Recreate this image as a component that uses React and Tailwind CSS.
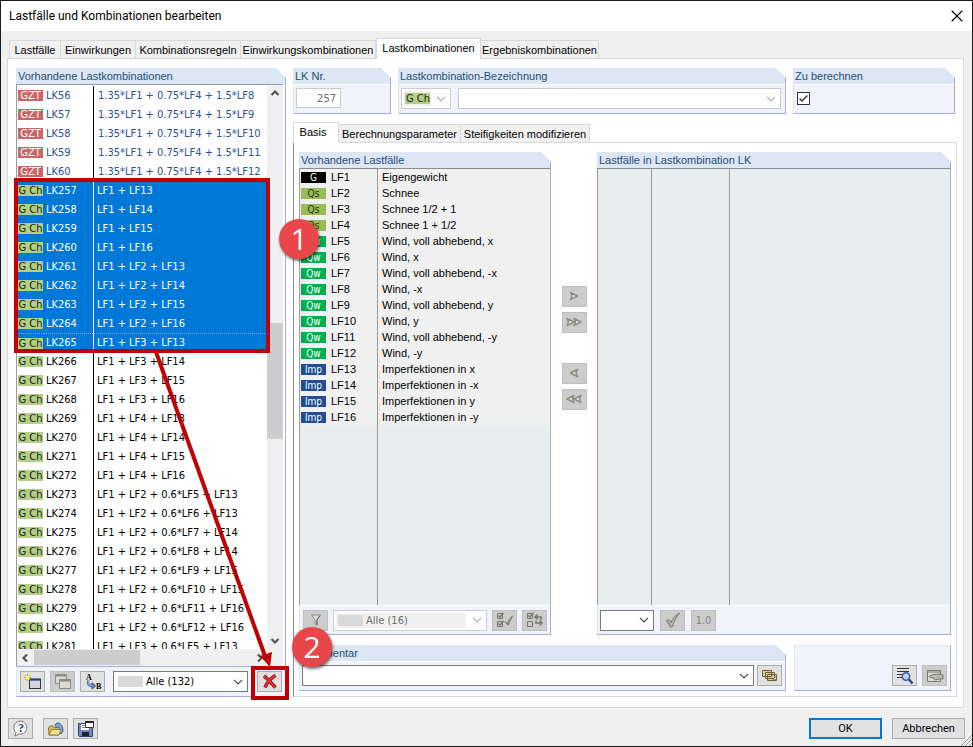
import { X } from "lucide-react";

const ulsCombos = [
  ["LK56", "1.35*LF1 + 0.75*LF4 + 1.5*LF8"],
  ["LK57", "1.35*LF1 + 0.75*LF4 + 1.5*LF9"],
  ["LK58", "1.35*LF1 + 0.75*LF4 + 1.5*LF10"],
  ["LK59", "1.35*LF1 + 0.75*LF4 + 1.5*LF11"],
  ["LK60", "1.35*LF1 + 0.75*LF4 + 1.5*LF12"],
];

const slsCombos = [
  ["LK257", "LF1 + LF13"],
  ["LK258", "LF1 + LF14"],
  ["LK259", "LF1 + LF15"],
  ["LK260", "LF1 + LF16"],
  ["LK261", "LF1 + LF2 + LF13"],
  ["LK262", "LF1 + LF2 + LF14"],
  ["LK263", "LF1 + LF2 + LF15"],
  ["LK264", "LF1 + LF2 + LF16"],
  ["LK265", "LF1 + LF3 + LF13"],
  ["LK266", "LF1 + LF3 + LF14"],
  ["LK267", "LF1 + LF3 + LF15"],
  ["LK268", "LF1 + LF3 + LF16"],
  ["LK269", "LF1 + LF4 + LF13"],
  ["LK270", "LF1 + LF4 + LF14"],
  ["LK271", "LF1 + LF4 + LF15"],
  ["LK272", "LF1 + LF4 + LF16"],
  ["LK273", "LF1 + LF2 + 0.6*LF5 + LF13"],
  ["LK274", "LF1 + LF2 + 0.6*LF6 + LF13"],
  ["LK275", "LF1 + LF2 + 0.6*LF7 + LF14"],
  ["LK276", "LF1 + LF2 + 0.6*LF8 + LF14"],
  ["LK277", "LF1 + LF2 + 0.6*LF9 + LF15"],
  ["LK278", "LF1 + LF2 + 0.6*LF10 + LF15"],
  ["LK279", "LF1 + LF2 + 0.6*LF11 + LF16"],
  ["LK280", "LF1 + LF2 + 0.6*LF12 + LF16"],
  ["LK281", "LF1 + LF3 + 0.6*LF5 + LF13"],
];

const SELECTED = 9;

const loadCases = [
  ["G", "LF1", "Eigengewicht"],
  ["Qs", "LF2", "Schnee"],
  ["Qs", "LF3", "Schnee 1/2 + 1"],
  ["Qs", "LF4", "Schnee 1 + 1/2"],
  ["Qw", "LF5", "Wind, voll abhebend, x"],
  ["Qw", "LF6", "Wind, x"],
  ["Qw", "LF7", "Wind, voll abhebend, -x"],
  ["Qw", "LF8", "Wind, -x"],
  ["Qw", "LF9", "Wind, voll abhebend, y"],
  ["Qw", "LF10", "Wind, y"],
  ["Qw", "LF11", "Wind, voll abhebend, -y"],
  ["Qw", "LF12", "Wind, -y"],
  ["Imp", "LF13", "Imperfektionen in x"],
  ["Imp", "LF14", "Imperfektionen in -x"],
  ["Imp", "LF15", "Imperfektionen in y"],
  ["Imp", "LF16", "Imperfektionen in -y"],
];

const badgeColors = {
  G: "bg-black text-white",
  Qs: "bg-[#9bbb59] text-[#26301a]",
  Qw: "bg-[#00b050] text-white",
  Imp: "bg-[#1f4e96] text-white",
};

/* Group box with a cut top right corner */
function Panel({ title, className = "", children }) {
  return (
    <section className={`flex flex-col ${className}`}>
      <h2 className="h-4 shrink-0 border-r border-[#a9a9ea] bg-[#dce6f4] pl-0.5 font-['Liberation_Sans',sans-serif] text-[11px] leading-4 whitespace-nowrap text-[#1f4e79] [clip-path:polygon(0_0,calc(100%-10px)_0,100%_10px,100%_100%,0_100%)]">
        {title}
      </h2>
      {children}
    </section>
  );
}

function PanelBody({ className = "", children }) {
  return (
    <div className={`border-r border-b border-l border-r-[#a9a9ea] border-b-[#a9a9ea] border-l-[#dce6f4] bg-[#f0f3f9] ${className}`}>
      {children}
    </div>
  );
}

function IconButton({ label, disabled, className = "", children }) {
  return (
    <button
      aria-label={label}
      title={label}
      disabled={disabled}
      className={`flex h-[21px] w-[25px] shrink-0 items-center justify-center border ${
        disabled ? "border-[#bfbfbf] bg-[#cccccc] text-[#838383]" : "border-[#adadad] bg-[#e1e1e1]"
      } ${className}`}
    >
      {children}
    </button>
  );
}

function Chevron({ className = "" }) {
  return (
    <svg viewBox="0 0 10 6" className={`pointer-events-none h-1.5 w-2.5 fill-none stroke-current ${className}`}>
      <path d="M1 .8 5 4.8 9 .8" strokeWidth="1.2" />
    </svg>
  );
}

/* Select with an overlaid swatch and arrow */
function Combo({ label, value = "", disabled, swatch, className = "" }) {
  return (
    <label className={`relative flex h-[21px] items-center border bg-white ${disabled ? "border-[#cccccc] text-[#6d6d6d]" : "border-[#7a7a7a] text-black"} ${className}`}>
      {disabled && swatch && <span className="absolute inset-y-0.5 right-5 left-0.5 bg-[#f0f0f0]" />}
      {swatch && <span className="absolute left-1 h-[11px] w-[25px] bg-[#d9d9d9]" />}
      <select
        aria-label={label}
        disabled={disabled}
        className={`relative h-full w-full appearance-none bg-transparent pt-0.5 font-['DejaVu_Sans_Condensed','DejaVu_Sans',sans-serif] text-[11px] opacity-100 outline-none ${swatch ? "pl-8" : "pl-1"}`}
      >
        <option>{value}</option>
      </select>
      <Chevron className={`absolute right-1 ${disabled ? "text-[#b0b0b0]" : "text-[#444444]"}`} />
    </label>
  );
}

function ComboRow({ id, formula, kind, selected, focused }) {
  const uls = kind === "GZT";
  return (
    <tr className={`h-[19px] ${selected ? "bg-[#0078d7] text-white" : uls ? "text-[#2a50a0]" : "text-black"}`}>
      <td className={`p-0 pl-px ${focused ? "border-t border-dotted border-[#ff8728]" : ""}`}>
        <span className={`block h-[11px] w-[25px] text-center leading-[11px] ${uls ? "bg-[#cc6666] text-white" : "bg-[#b2cf85] text-[#1c1c1c]"}`}>
          {kind}
        </span>
      </td>
      <td className={`p-0 pl-0.5 leading-4 ${focused ? "border-t border-dotted border-t-[#ff8728]" : ""}`}>{id}</td>
      <td className={`border-l p-0 leading-4 ${selected ? "border-l-white" : "border-l-black"} ${uls ? "pl-1" : "pl-[3px]"} ${focused ? "border-t border-dotted border-t-[#ff8728] [border-left-style:solid]" : ""}`}>
        {formula}
      </td>
    </tr>
  );
}

function ScrollArrow({ dir }) {
  const turn = { up: "", down: "rotate-180", left: "-rotate-90", right: "rotate-90" }[dir];
  return (
    <svg viewBox="0 0 10 8" className={`h-2 w-2.5 shrink-0 fill-none stroke-[#555555] ${turn}`}>
      <path d="M1.5 6 5 2.5 8.5 6" strokeWidth="2.2" />
    </svg>
  );
}

function CombinationList() {
  return (
    <Panel title="Vorhandene Lastkombinationen" className="w-[270px] shrink-0">
      <div className="flex min-h-0 flex-1 flex-col border-r border-[#a9a9ea] pr-0.5">
        <div className="flex min-h-0 flex-1 border-t border-l border-[#9a9a9a]">
          <div className="h-full min-w-0 flex-1 overflow-hidden pt-px">
            <table className="w-full table-fixed border-separate border-spacing-0 font-['DejaVu_Sans_Condensed','DejaVu_Sans',sans-serif] text-[11px] whitespace-nowrap">
              <colgroup>
                <col className="w-[27px]" />
                <col className="w-[49px]" />
                <col />
              </colgroup>
              <tbody>
                {ulsCombos.map(([id, formula]) => (
                  <ComboRow key={id} id={id} formula={formula} kind="GZT" />
                ))}
                {slsCombos.map(([id, formula], i) => (
                  <ComboRow key={id} id={id} formula={formula} kind="G Ch" selected={i < SELECTED} focused={i === SELECTED - 1} />
                ))}
              </tbody>
            </table>
          </div>
          <div className="flex w-4 flex-col items-center justify-between bg-[#f0f0f0] py-1">
            <ScrollArrow dir="up" />
            <div className="flex w-full flex-1 flex-col">
              <div className="basis-[226px]" />
              <div className="h-[116px] bg-[#cdcdcd]" />
            </div>
            <ScrollArrow dir="down" />
          </div>
        </div>
        <div className="flex h-[17px] shrink-0 items-center border-l border-[#9a9a9a] bg-[#f0f0f0] pr-[18px] pl-[3px]">
          <ScrollArrow dir="left" />
          <div className="flex h-[15px] flex-1 pl-1">
            <div className="w-[106px] bg-[#cdcdcd]" />
          </div>
          <ScrollArrow dir="right" />
        </div>
      </div>
      <PanelBody className="flex h-[31px] shrink-0 items-center gap-[5px] border-t border-t-[#a9a9ea] px-[3px]">
        <IconButton label="Neu">
          <svg viewBox="0 0 20 18" className="h-[18px] w-5">
            <rect x="6.5" y="6.5" width="11" height="9" fill="#d2d4da" stroke="#333" />
            <path d="M6 6.500h12" stroke="#24418a" strokeWidth="2.200" />
            <path d="M4.500 1v7M1 4.500h7M2 2l5 5M7 2l-5 5" stroke="#c2a51c" />
            <circle cx="4.500" cy="4.500" r="1.900" fill="#ffff50" />
          </svg>
        </IconButton>
        <IconButton label="Kopieren" disabled>
          <svg viewBox="0 0 18 18" className="size-[18px]" fill="#d9d9d0" stroke="#8a8a84">
            <path d="M1.500 1.500h11v9h-11z" />
            <path d="M1.500 2.500h11" strokeWidth="2" />
            <path d="M5.500 6.500h11v9h-11z" />
            <path d="M5.500 7.500h11" strokeWidth="2" />
          </svg>
        </IconButton>
        <IconButton label="Umnummerieren">
          <svg viewBox="0 0 20 18" className="h-[18px] w-5">
            <text x="3" y="7" fontSize="8" fontWeight="bold" fontFamily="Liberation Serif">A</text>
            <text x="13" y="16" fontSize="8" fontWeight="bold" fontFamily="Liberation Serif">B</text>
            <path d="M5.500 7.500c-1.500 4 1 6 5 5.500M8.500 10l3 3-3 2.500" fill="none" stroke="#48699f" strokeWidth="2.400" />
            <path d="M5.500 8c-1 3.500 1 5 5 5" fill="none" stroke="#a5c0e8" />
          </svg>
        </IconButton>
        <Combo label="Filter" value="Alle (132)" swatch className="ml-[3px] min-w-0 flex-1" />
        <IconButton label="Löschen" className="ml-1">
          <svg viewBox="0 0 16 16" className="size-4" fill="none">
            <path d="M2 2c4 3 8 8 11.500 11.500M13.500 1.500C9 4 5 9 3 13.500" stroke="#6d1a1e" strokeWidth="3.500" />
            <path d="M2 2c4 3 8 8 11.500 11.500M13.500 1.500C9 4 5 9 3 13.500" stroke="#df2c32" strokeWidth="2.200" />
          </svg>
        </IconButton>
      </PanelBody>
    </Panel>
  );
}

function LoadCaseList() {
  const cell = "border-r border-[#9a9a9a] p-0";
  return (
    <Panel title="Vorhandene Lastfälle" className="w-[252px] shrink-0">
      <div className="min-h-0 flex-1 overflow-hidden border-t border-r border-l border-t-[#8c8c8c] border-r-[#a9a9ea] border-l-[#9a9a9a] bg-[#e8eeee]">
        <table className="h-full w-full table-fixed border-separate border-spacing-0 font-['Liberation_Sans',sans-serif] text-[11px] whitespace-nowrap text-black">
          <colgroup>
            <col className="w-[31px]" />
            <col className="w-[47px]" />
            <col />
          </colgroup>
          <tbody>
            {loadCases.map(([kind, id, name]) => (
              <tr key={id} className="h-4 bg-[#f0f0f0]">
                <td className="h-4 p-0 pl-px">
                  <span className={`block h-[11px] w-[25px] text-center font-['DejaVu_Sans_Condensed','DejaVu_Sans',sans-serif] text-[10px] leading-[11px] ${badgeColors[kind]}`}>{kind}</span>
                </td>
                <td className={`h-4 leading-4 ${cell}`}>{id}</td>
                <td className="h-4 p-0 pl-1 leading-4">{name}</td>
              </tr>
            ))}
            <tr>
              <td className="p-0" />
              <td className={cell} />
              <td className="p-0" />
            </tr>
          </tbody>
        </table>
      </div>
      <PanelBody className="flex h-[30px] shrink-0 items-center gap-[5px] border-t border-t-white px-[3px]">
        <IconButton label="Filter" disabled>
          <svg viewBox="0 0 14 14" className="size-3.5" fill="#dadada" stroke="#8a8a82">
            <path d="M2.500 2h9L8 7v5l-2-1V7z" />
            <path d="M10.500 3 8 7v4.500" stroke="#5c5c55" />
          </svg>
        </IconButton>
        <Combo label="Lastfälle filtern" value="Alle (16)" disabled swatch className="min-w-0 flex-1" />
        <IconButton label="Alle auswählen" disabled>
          <svg viewBox="0 0 18 16" className="h-4 w-[18px]" fill="none" stroke="#77776f">
            <path d="M1.500 1.500h5v5h-5zM1.500 9.500h5v5h-5z" />
            <path d="M2 3.500l2 1.500 3.500-4M2 11.500l2 1.500 3.500-4" strokeWidth="1.500" />
            <path d="M9 9.500l2.500 3c1-4 2-6 5-8.500-1.500 3-2.500 5-4 9z" fill="#b5b5ad" />
          </svg>
        </IconButton>
        <IconButton label="Auswahl umkehren" disabled>
          <svg viewBox="0 0 18 16" className="h-4 w-[18px]" fill="none" stroke="#77776f">
            <path d="M1.500 1.500h5v5h-5zM1.500 9.500h5v5h-5z" />
            <path d="M2 3.500l2 1.500 3.500-4" strokeWidth="1.500" />
            <path d="M9.500 5H15v3M11.500 2.500 9 5l2.500 2.500M10 8.500V11h6M13.500 8.500 16 11l-2.500 2.500" strokeWidth="1.600" />
          </svg>
        </IconButton>
      </PanelBody>
    </Panel>
  );
}

function MoveButton({ label, double, left, className = "" }) {
  return (
    <IconButton label={label} disabled className={className}>
      <svg viewBox="0 0 18 10" className={`mb-0.5 h-2.5 w-[18px] ${left ? "rotate-180" : ""}`} fill="#e6e6dc" stroke="#8c8c84" strokeWidth="1.400" strokeLinejoin="round">
        {double ? <path d="M2 1.500 3.500 5 2 8.500 9 5zM9 1.500 10.500 5 9 8.500 16 5z" /> : <path d="M5.500 1.500 7 5 5.500 8.500 12.500 5z" />}
      </svg>
    </IconButton>
  );
}

function AssignedList() {
  return (
    <Panel title="Lastfälle in Lastkombination LK" className="min-w-0 flex-1">
      <div className="flex min-h-0 flex-1 border-t border-r border-l border-t-[#8c8c8c] border-r-[#a9a9ea] border-l-[#9a9a9a] bg-[#e8eeee]">
        <table className="h-full w-full table-fixed border-separate border-spacing-0">
          <tbody>
            <tr>
              <td className="w-[54px] border-r border-[#9a9a9a] p-0" />
              <td className="w-[78px] border-r border-[#9a9a9a] p-0" />
              <td className="p-0" />
            </tr>
          </tbody>
        </table>
      </div>
      <PanelBody className="flex h-[30px] shrink-0 items-center gap-1.5 border-t border-t-white px-0.5">
        <Combo label="Faktor" className="w-[54px]" />
        <IconButton label="Faktor übernehmen" disabled>
          <svg viewBox="0 0 16 16" className="size-4" fill="#b5b5ad" stroke="#77776f">
            <path d="M1.500 8.500 4 7.500l2 3C8 6 10 3.500 14.500 1 11 5 9 10 7 15H5.500z" />
          </svg>
        </IconButton>
        <IconButton label="Faktor 1.0" disabled>
          <span className="pt-0.5 font-['DejaVu_Sans_Condensed','DejaVu_Sans',sans-serif] text-[11px]">1.0</span>
        </IconButton>
      </PanelBody>
    </Panel>
  );
}

function TopPanels() {
  return (
    <div className="flex h-[46px] shrink-0 gap-[7px] pr-2">
      <Panel title="LK Nr." className="w-[98px]">
        <PanelBody className="flex flex-1 border-t border-t-white px-0.5 pt-[3px]">
          <input
            aria-label="LK Nr."
            defaultValue="257"
            disabled
            className="h-5 w-[45px] border border-[#cccccc] bg-white px-1 text-right font-['DejaVu_Sans_Condensed','DejaVu_Sans',sans-serif] text-[11px] text-[#6d6d6d]"
          />
        </PanelBody>
      </Panel>
      <Panel title="Lastkombination-Bezeichnung" className="min-w-0 flex-1">
        <PanelBody className="flex flex-1 gap-[7px] border-t border-t-white px-0.5 pt-[3px] pr-1">
          <label className="relative flex h-[21px] w-[50px] shrink-0 items-center border border-[#cccccc] bg-white">
            <span className="absolute left-0.5 h-[15px] w-[27px] bg-[#f0f0f0]" />
            <span className="absolute left-[3px] h-[11px] w-[25px] bg-[#b2cf85]" />
            <select aria-label="Bemessungssituation" disabled className="relative h-full w-full appearance-none bg-transparent pt-0.5 pl-1 font-['DejaVu_Sans_Condensed','DejaVu_Sans',sans-serif] text-[11px] text-[#1c1c1c] opacity-100">
              <option>G Ch</option>
            </select>
            <Chevron className="absolute right-1 text-[#b0b0b0]" />
          </label>
          <Combo label="Lastkombination-Bezeichnung" disabled className="min-w-0 flex-1" />
        </PanelBody>
      </Panel>
      <Panel title="Zu berechnen" className="w-[162px]">
        <PanelBody className="flex-1 border-t border-t-white px-[3px] pt-[7px]">
          <label className="relative block size-[13px]">
            <input type="checkbox" defaultChecked aria-label="Zu berechnen" className="block size-[13px] appearance-none border border-[#333333] bg-white" />
            <svg viewBox="0 0 13 13" className="pointer-events-none absolute inset-0 size-[13px] fill-none stroke-[#333333]">
              <path d="M2.500 6.500 5 9l5.500-5.500" strokeWidth="1.400" />
            </svg>
          </label>
        </PanelBody>
      </Panel>
    </div>
  );
}

function Tab({ active, className = "", children }) {
  return (
    <button
      role="tab"
      aria-selected={!!active}
      className={`relative shrink-0 border-t border-r border-[#d9d9d9] text-center font-['Liberation_Sans',sans-serif] text-[11px] whitespace-nowrap text-black ${
        active ? "-mb-px h-[21px] border-l bg-white pb-0.5 leading-[18px]" : "h-[18px] bg-[#f0f0f0] leading-[18px]"
      } ${className}`}
    >
      {children}
    </button>
  );
}

function CommentRow() {
  return (
    <div className="mt-2.5 flex h-[46px] shrink-0 gap-2">
      <Panel title="Kommentar" className="min-w-0 flex-1">
        <PanelBody className="flex flex-1 gap-[3px] border-t border-t-white px-0.5 pt-[3px] pr-[3px]">
          <Combo label="Kommentar" className="min-w-0 flex-1" />
          <IconButton label="Kommentar übernehmen">
            <svg viewBox="0 0 18 14" className="h-3.5 w-[18px]" fill="#d9cd94" stroke="#6b5e38">
              <path d="M1.500 1.500h9v6h-9zM4.500 3.500h9v6h-9zM6.500 5.500h9v6h-9z" />
              <path d="M12 10.500l3-3v3z" fill="#fff" strokeWidth=".6" />
            </svg>
          </IconButton>
        </PanelBody>
      </Panel>
      <div className="flex w-[157px] items-end justify-end gap-[5px] border border-t-[#dce6f4] border-r-[#a9a9ea] border-b-[#a9a9ea] border-l-[#dce6f4] bg-[#f0f3f9] pr-[3px] pb-1">
        <IconButton label="Details">
          <svg viewBox="0 0 20 18" className="h-[18px] w-5" fill="none">
            <path d="M2 1.500h12M2 4.500h12M2 7.500h6M2 10.500h5" stroke="#333" />
            <circle cx="11" cy="9.500" r="3.700" fill="#bfd2f5" stroke="#3d58b0" strokeWidth="1.500" />
            <path d="M14 12.500l3.500 4" stroke="#2e448e" strokeWidth="2.500" />
          </svg>
        </IconButton>
        <IconButton label="Bearbeiten" disabled>
          <svg viewBox="0 0 18 14" className="h-3.5 w-[18px]" fill="#dcdcd4" stroke="#7b7b74">
            <path d="M1.500 1.500h13v11h-13zM1.500 3h13" />
            <path d="M3 7.500l4-2 5-.5 5 1v4h-4l-4 1-1-2-4-.500z" fill="#b9b9b1" />
          </svg>
        </IconButton>
      </div>
    </div>
  );
}

function Details() {
  return (
    <div className="flex min-w-0 flex-1 flex-col">
      <TopPanels />
      <div role="tablist" className="mt-2 flex shrink-0 items-end">
        <Tab active className="w-[46px] pr-1.5">Basis</Tab>
        <Tab className="w-[122px]">Berechnungsparameter</Tab>
        <Tab className="w-[129px]">Steifigkeiten modifizieren</Tab>
      </div>
      <div className="mr-1.5 flex min-h-0 flex-1 flex-col border border-[#d9d9d9] border-l-[#8c8c8c] px-[5px] pt-[9px] pb-[5px]">
        <div className="flex min-h-0 flex-1">
          <LoadCaseList />
          <div className="flex w-[46px] shrink-0 flex-col items-center gap-[5px] pt-[134px]">
            <MoveButton label="Hinzufügen" />
            <MoveButton label="Alle hinzufügen" double />
            <MoveButton label="Entfernen" left className="mt-[25px]" />
            <MoveButton label="Alle entfernen" left double />
          </div>
          <AssignedList />
        </div>
        <CommentRow />
      </div>
    </div>
  );
}

function StepMarker({ number, className }) {
  return (
    <div className={`absolute flex size-10 items-center justify-center rounded-full bg-[#e84648] font-['Open_Sans',sans-serif] text-[30px] leading-none text-white shadow-[1px_2px_3px_rgba(0,0,0,0.55)] ${className}`}>
      {number}
    </div>
  );
}

/* Red frames, arrow and step numbers drawn over the dialog */
function Annotations() {
  return (
    <div className="pointer-events-none absolute -inset-px overflow-hidden">
      <div className="absolute top-[178px] left-[14px] h-[175px] w-[256px] border-4 border-[#c00000]" />
      <div className="absolute top-[666px] left-[251px] h-[34px] w-[38px] border-4 border-[#c00000]" />
      <svg viewBox="0 0 300 747" className="absolute top-0 left-0 h-[747px] w-[300px]">
        <path d="M156 352 265 656" stroke="#c00000" strokeWidth="4" />
        <path d="M270 667 260 656 272 652z" fill="#c00000" />
      </svg>
      <StepMarker number="1" className="top-[219px] left-[279px]" />
      <StepMarker number="2" className="top-[627px] left-[292px]" />
    </div>
  );
}

export default function App() {
  return (
    <div className="relative flex h-screen w-full flex-col border border-[#1a1a1a] bg-[#f0f0f0] font-['Roboto',sans-serif] text-[11px]">
      <header className="flex h-[30px] shrink-0 items-center justify-between bg-white pr-[5px] pl-2">
        <h1 className="text-xs text-black">Lastfälle und Kombinationen bearbeiten</h1>
        <button aria-label="Schließen">
          <X size={20} strokeWidth={1.3} />
        </button>
      </header>

      <div role="tablist" className="flex h-[27px] shrink-0 items-end pl-2">
        <Tab className="w-[52px] border-l">Lastfälle</Tab>
        <Tab className="w-[75px]">Einwirkungen</Tab>
        <Tab className="w-[105px]">Kombinationsregeln</Tab>
        <Tab className="w-[135px]">Einwirkungskombinationen</Tab>
        <Tab active className="w-[105px]">Lastkombinationen</Tab>
        <Tab className="w-[118px]">Ergebniskombinationen</Tab>
      </div>

      <main className="mr-2 ml-1.5 flex min-h-0 flex-1 gap-[7px] border border-[#d9d9d9] bg-white pt-[9px] pb-2.5 pl-2">
        <CombinationList />
        <Details />
      </main>

      <footer className="flex h-[38px] shrink-0 items-start justify-between pt-2.5 pr-[7px] pl-[7px]">
        <div className="flex gap-[5px]">
          <IconButton label="Hilfe" className="mr-[5px]">
            <svg viewBox="0 0 18 18" className="size-[18px]">
              <path d="M3 16l1-3.500a6.500 6.500 0 1 1 3 1.500z" fill="#f4f6fa" stroke="#777" />
              <text x="6" y="12" fontSize="12" fontWeight="bold" fill="#24418a" fontFamily="Liberation Serif">?</text>
            </svg>
          </IconButton>
          <IconButton label="Öffnen">
            <svg viewBox="0 0 18 16" className="h-4 w-[18px]">
              <path d="M8 4c2-4 8-2 8 6l-2 3z" fill="#7fa2dc" stroke="#3c5a95" />
              <path d="M1.500 6.500 3 5h3l1 1.500h5v7.500h-10z" fill="#d8bc5c" stroke="#83702c" />
              <path d="M2 14 4.500 8.500H14L12 14z" fill="#ecdc92" stroke="#83702c" strokeWidth=".8" />
            </svg>
          </IconButton>
          <IconButton label="Speichern">
            <svg viewBox="0 0 18 18" className="size-[18px]">
              <path d="M1.500 3.500h14v13h-13l-1-1z" fill="#7784c4" stroke="#363f78" />
              <path d="M4 4h8v6H4z" fill="#fff" />
              <path d="M5 5.500h5M5 7.500h5" stroke="#888" />
              <path d="M5 12h7v4H5z" fill="#222" />
              <path d="M8.500 1.500h8v6h-8z" fill="#fff" stroke="#333" />
              <path d="M8.500 2h8" stroke="#222" strokeWidth="2" />
            </svg>
          </IconButton>
        </div>
        <div className="flex gap-2.5 text-[11px]">
          <button className="h-[21px] w-[73px] border-2 border-[#0078d7] bg-[#e1e1e1] leading-4">OK</button>
          <button className="h-[21px] w-[73px] border border-[#adadad] bg-[#e1e1e1] leading-4">Abbrechen</button>
        </div>
      </footer>
      <svg viewBox="0 0 12 12" className="absolute right-0 bottom-0 size-3 stroke-[#9a9a9a]">
        <path d="M1 12 12 1M5 12l7-7M9 12l3-3" />
      </svg>

      <Annotations />
    </div>
  );
}
